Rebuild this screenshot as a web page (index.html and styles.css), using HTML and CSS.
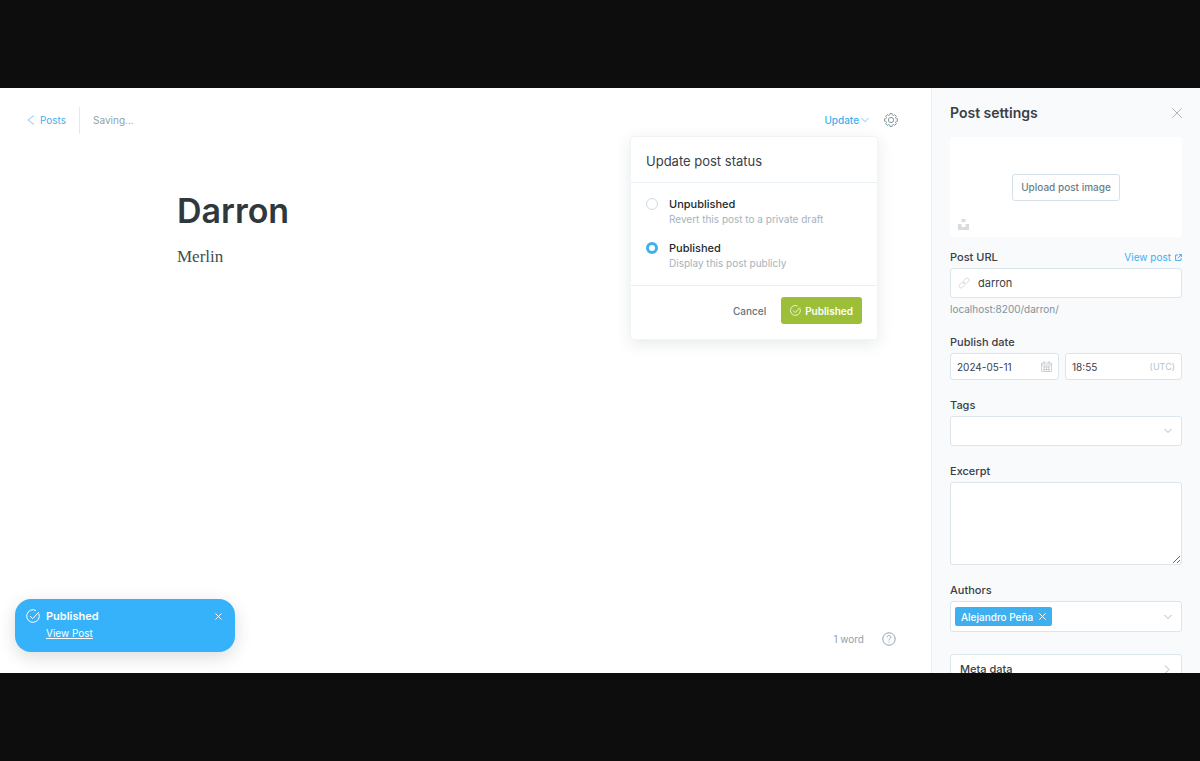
FILE: index.html
```html
<!DOCTYPE html>
<html lang="en">
<head>
<meta charset="utf-8">
<meta name="viewport" content="width=device-width, initial-scale=1">
<title>Darron - Post editor</title>
<link rel="stylesheet" href="styles.css">
</head>
<body>
<div class="app">
  <main class="editor">
    <header class="topbar">
      <a class="back" href="#posts">
        <svg width="8" height="10" viewBox="0 0 8 10" class="icon"><path d="M7 .5 1 5l6 4.500"/></svg>
        Posts
      </a>
      <span class="saving">Saving...</span>
      <div class="actions">
        <button class="update" type="button" aria-expanded="true">Update
          <svg width="8" height="6" viewBox="0 0 8 6" class="icon"><path d="M.5 1 4 4.700 7.500 1"/></svg>
        </button>
        <button class="gear" type="button" aria-label="Settings">
          <svg width="14" height="14" viewBox="0 0 24 24" class="icon"><circle cx="12" cy="12" r="4.500"/><path d="M10.060.97h3.880Q14.260 6.550 18.420 2.830L21.170 5.580Q17.450 9.740 23.030 10.060V13.940Q17.450 14.260 21.170 18.420L18.420 21.170Q14.260 17.450 13.940 23.030H10.060Q9.740 17.450 5.580 21.170L2.830 18.420Q6.550 14.260.97 13.940V10.060Q6.550 9.740 2.830 5.580L5.580 2.830Q9.740 6.550 10.060.97z"/></svg>
        </button>
        <form class="popover">
          <h2 class="popover-title">Update post status</h2>
          <div class="options">
            <label class="option"><input class="radio" type="radio" name="status"><span class="option-text"><strong class="option-name">Unpublished</strong><span class="option-note">Revert this post to a private draft</span></span></label>
            <label class="option"><input class="radio" type="radio" name="status" checked><span class="option-text"><strong class="option-name">Published</strong><span class="option-note">Display this post publicly</span></span></label>
          </div>
          <div class="popover-footer">
            <button class="cancel" type="button">Cancel</button>
            <button class="publish" type="button">
              <svg width="11" height="11" viewBox="0 0 14 14" class="icon"><path d="M12.700 4.600A6.300 6.300 0 1 1 9.700 1.300M4 7l2.700 2.700L12.800 3"/></svg>
              Published
            </button>
          </div>
        </form>
      </div>
    </header>
    <article class="post">
      <h1 class="post-title">Darron</h1>
      <p class="post-body">Merlin</p>
    </article>
    <footer class="status">
      <span>1 word</span>
      <a class="help" href="#help" aria-label="Help">
        <svg width="14" height="14" viewBox="0 0 14 14" class="icon"><circle cx="7" cy="7" r="6.200"/><path d="M5.100 5.300c0-2.500 3.800-2.300 3.800 0C8.900 6.700 7 6.700 7 8.300M7 9.600v1"/></svg>
      </a>
    </footer>
    <aside class="toast" role="status">
      <svg width="14" height="14" viewBox="0 0 14 14" class="icon toast-icon"><path d="M12.800 4.600A6.300 6.300 0 1 1 10 1.500M4 7l2.700 2.700L12.900 3"/></svg>
      <div class="toast-text"><strong class="toast-title">Published</strong><a class="toast-link" href="#view">View Post</a></div>
      <button class="toast-close" type="button" aria-label="Close"><svg width="7" height="7" viewBox="0 0 7 7" class="icon"><path d="m.5.5 6 6m0-6-6 6"/></svg></button>
    </aside>
  </main>
  <aside class="settings">
    <header class="settings-head">
      <h2 class="settings-title">Post settings</h2>
      <button class="close" type="button" aria-label="Close"><svg width="10" height="10" viewBox="0 0 10 10" class="icon"><path d="m.3.3 9.400 9.400m0-9.400L.3 9.700"/></svg></button>
    </header>
    <div class="upload">
      <button class="upload-button" type="button">Upload post image</button>
      <svg class="unsplash" width="11" height="11" viewBox="0 0 11 11"><path d="M3.500 0h4v3h-4zM0 5h3.500v3h4V5H11v6H0z"/></svg>
    </div>
    <div class="field first">
      <div class="label-row"><label class="label" for="url">Post URL</label>
        <a class="view" href="#view">View post <svg width="7" height="7" viewBox="0 0 7 7" class="icon"><path d="M3 1H.6v5.400H6V4M4 .6h2.400V3M6.400.6 3 4"/></svg></a></div>
      <div class="control">
        <svg width="12" height="12" viewBox="0 0 12 12" class="icon pale"><path d="m5 7 2-2M5.400 3.900l2.200-2.300c1.800-1.800 4.600 1 2.800 2.800L8.300 6.500C7.500 7.300 6.300 7.200 5.600 6.400M6.600 8.100l-2.200 2.300c-1.800 1.800-4.600-1-2.800-2.800l2.100-2.100c.8-.8 2-.7 2.700.1"/></svg>
        <input class="input large" id="url" type="text" value="darron">
      </div>
      <p class="note">localhost:8200/darron/</p>
    </div>
    <div class="field">
      <label class="label" for="date">Publish date</label>
      <div class="date-row">
        <div class="control short"><input class="input" id="date" type="text" value="2024-05-11">
          <svg width="11" height="11" viewBox="0 0 11 11" class="icon grey"><path d="M.5 2h10v8.500H.5zM.5 4h10M3 0v3M8 0v3M2 6h7M2 8.500h7M3.200 5v5M5.500 5v5M7.800 5v5"/></svg></div>
        <div class="control short"><input class="input" type="text" value="18:55" aria-label="Publish time"><span class="zone">(UTC)</span></div>
      </div>
    </div>
    <div class="field">
      <label class="label" for="tags">Tags</label>
      <div class="control"><select class="input" id="tags"><option></option></select>
        <svg width="8" height="6" viewBox="0 0 8 6" class="icon slate"><path d="M.5 1 4 4.500 7.500 1"/></svg></div>
    </div>
    <div class="field">
      <label class="label" for="excerpt">Excerpt</label>
      <textarea class="excerpt" id="excerpt"></textarea>
    </div>
    <div class="field">
      <label class="label" for="authors">Authors</label>
      <div class="control authors">
        <span class="chip">Alejandro Peña <button class="chip-remove" type="button" aria-label="Remove Alejandro Peña"><svg width="7" height="7" viewBox="0 0 7 7" class="icon"><path d="m.3.3 6.400 6.400m0-6.400L.3 6.700"/></svg></button></span>
        <input class="input" id="authors" type="text">
        <svg width="8" height="6" viewBox="0 0 8 6" class="icon slate"><path d="M.5 1 4 4.500 7.500 1"/></svg>
      </div>
    </div>
    <button class="meta" type="button">Meta data
      <svg width="6" height="9" viewBox="0 0 6 9" class="icon slate"><path d="m1 .5 4 4-4 4"/></svg></button>
  </aside>
</div>
</body>
</html>
```
FILE: styles.css
```css
* { box-sizing: border-box; }
body {
  margin: 0;
  padding: 88px 0;
  background: #0d0d0d;
  color: #394047;
  font: 10px/16px Inter, "Liberation Sans", sans-serif;
}
h1, h2, p { margin: 0; }
a { color: inherit; text-decoration: none; }
button, input, select, textarea { font: inherit; color: inherit; }
button { display: flex; align-items: center; border: 0; padding: 0; background: none; }
.icon { display: block; flex: none; fill: none; stroke: currentColor; stroke-width: 1; }
.pale { color: #c5d2d9; stroke-width: .8; }
.grey { color: #c0c8cd; stroke-width: .8; }
.slate { color: #abb9c1; }

.app { display: flex; height: calc(100vh - 176px); overflow: hidden; background: #fff; }
.editor { position: relative; flex: 1; display: flex; flex-direction: column; min-width: 0; }
.topbar { display: flex; align-items: center; height: 64px; padding: 0 33px 0 27px; }
.back { display: flex; align-items: center; gap: 5px; height: 27px; padding-right: 13px; border-right: 1px solid #dfeaf3; color: #4bade9; }
.back .icon { stroke-width: .7; }
.saving { margin-left: 13px; color: #8fa2ac; }
.actions { position: relative; display: flex; align-items: center; gap: 15px; margin-left: auto; }
.update { gap: 2px; color: #3eb0ef; font-weight: 500; }
.update .icon { stroke-width: .7; }
.gear { color: #738a94; }
.gear .icon { stroke-width: 1.500; }
.popover {
  position: absolute;
  top: 24px;
  right: 20px;
  width: 248px;
  border: 1px solid #f1f4f6;
  border-radius: 4px;
  background: #fff;
  box-shadow: 0 4px 16px rgba(30, 50, 60, .1);
}
.popover-title { padding: 16px 15px 13px; font-size: 13px; line-height: 16px; font-weight: 400; border-bottom: 1px solid #e8f0f6; }
.options { display: grid; gap: 13px; padding: 13px 15px 14px; border-bottom: 1px solid #e8f0f6; }
.option { display: flex; gap: 11px; }
.option-text { display: grid; }
.option-name { font-weight: 500; font-size: 11px; line-height: 16px; color: #23292d; }
.option-note { line-height: 15px; color: #a5b3bb; }
.radio { appearance: none; width: 12px; height: 12px; margin: 2px 0 0; border: 1px solid #c5dcec; border-radius: 50%; background: #fff; }
.radio:checked { border: 3px solid #3eb0ef; }
.popover-footer { display: flex; justify-content: flex-end; align-items: center; gap: 15px; padding: 11px 15px 15px; }
.cancel { color: #5f747e; font-weight: 500; }
.publish { gap: 4px; height: 27px; padding: 0 9px; border-radius: 3px; background: #9cbf37; color: #fff; font-weight: 600; }

.post { flex: 1; padding: 33px 177px; }
.post-title { font-size: 34px; line-height: 52px; font-weight: 600; color: #2e383d; }
.post-body { margin-top: 8px; font-family: "Liberation Serif", serif; font-size: 17px; line-height: 24px; color: #414c52; }
.status { display: flex; justify-content: flex-end; align-items: center; gap: 18px; height: 68px; padding-right: 35px; color: #8fa2ac; }
.toast {
  position: absolute;
  left: 15px;
  bottom: 21px;
  display: flex;
  align-items: flex-start;
  gap: 6px;
  width: 220px;
  height: 53px;
  padding: 9px 13px 0 11px;
  border-radius: 16px;
  background: #35b2f9;
  color: #fff;
  box-shadow: 0 5px 18px rgba(0, 0, 0, .14);
}
.toast-icon { margin-top: 1px; }
.toast-text { display: grid; gap: 1px; flex: 1; }
.toast-title { font-size: 11px; font-weight: 600; }
.toast-link { justify-self: start; text-decoration: underline; }
.toast-close { height: 16px; }

.settings { flex: 0 0 269px; padding: 0 18px; border-left: 1px solid #e9eff4; background: #f8fafc; overflow: hidden; }
.settings-head { display: flex; justify-content: space-between; align-items: center; height: 49px; }
.settings-title { font-size: 14px; line-height: 20px; font-weight: 600; }
.close { color: #8c989f; }
.close .icon { stroke-width: .7; }
.upload { position: relative; display: grid; place-items: center; height: 100px; border-radius: 3px; background: #fff; }
.upload-button { height: 27px; padding: 0 8px; border: 1px solid #d5e1e8; border-radius: 3px; background: #fff; color: #6a7f89; font-weight: 500; }
.unsplash { position: absolute; left: 8px; bottom: 7px; fill: #d9dcde; }
.field { display: flex; flex-direction: column; gap: 3px; margin-top: 17px; }
.field.first { margin-top: 12px; }
.label { font-size: 11px; font-weight: 500; }
.label-row { display: flex; justify-content: space-between; }
.view { display: flex; align-items: center; gap: 4px; color: #3eb0ef; }
.control { display: flex; align-items: center; gap: 8px; height: 30px; padding: 0 9px 0 7px; border: 1px solid #dae5ec; border-radius: 3px; background: #fff; }
.control.short { height: 27px; padding: 0 6px; }
.control.authors { height: 31px; padding-left: 4px; }
.input { appearance: none; flex: 1; width: 100%; min-width: 0; padding: 0; border: 0; background: transparent; outline: 0; }
.input.large { font-size: 11px; }
.note { color: #7f939d; }
.date-row { display: grid; grid-template-columns: 109px 1fr; gap: 6px; }
.zone { font-size: 9px; color: #b7c3ca; }
.excerpt { display: block; width: 100%; height: 83px; padding: 6px; border: 1px solid #dae5ec; border-radius: 3px; background: #fff; resize: vertical; }
.chip { display: flex; align-items: center; gap: 6px; flex: none; height: 19px; padding: 0 6px; border-radius: 2px; background: #3eb0ef; color: #fff; font-weight: 500; }
.meta { justify-content: space-between; width: 100%; height: 48px; margin-top: 22px; padding: 0 11px 18px 9px; border: 1px solid #dae5ec; border-radius: 3px; background: #fff; font-size: 11px; font-weight: 500; }
```
